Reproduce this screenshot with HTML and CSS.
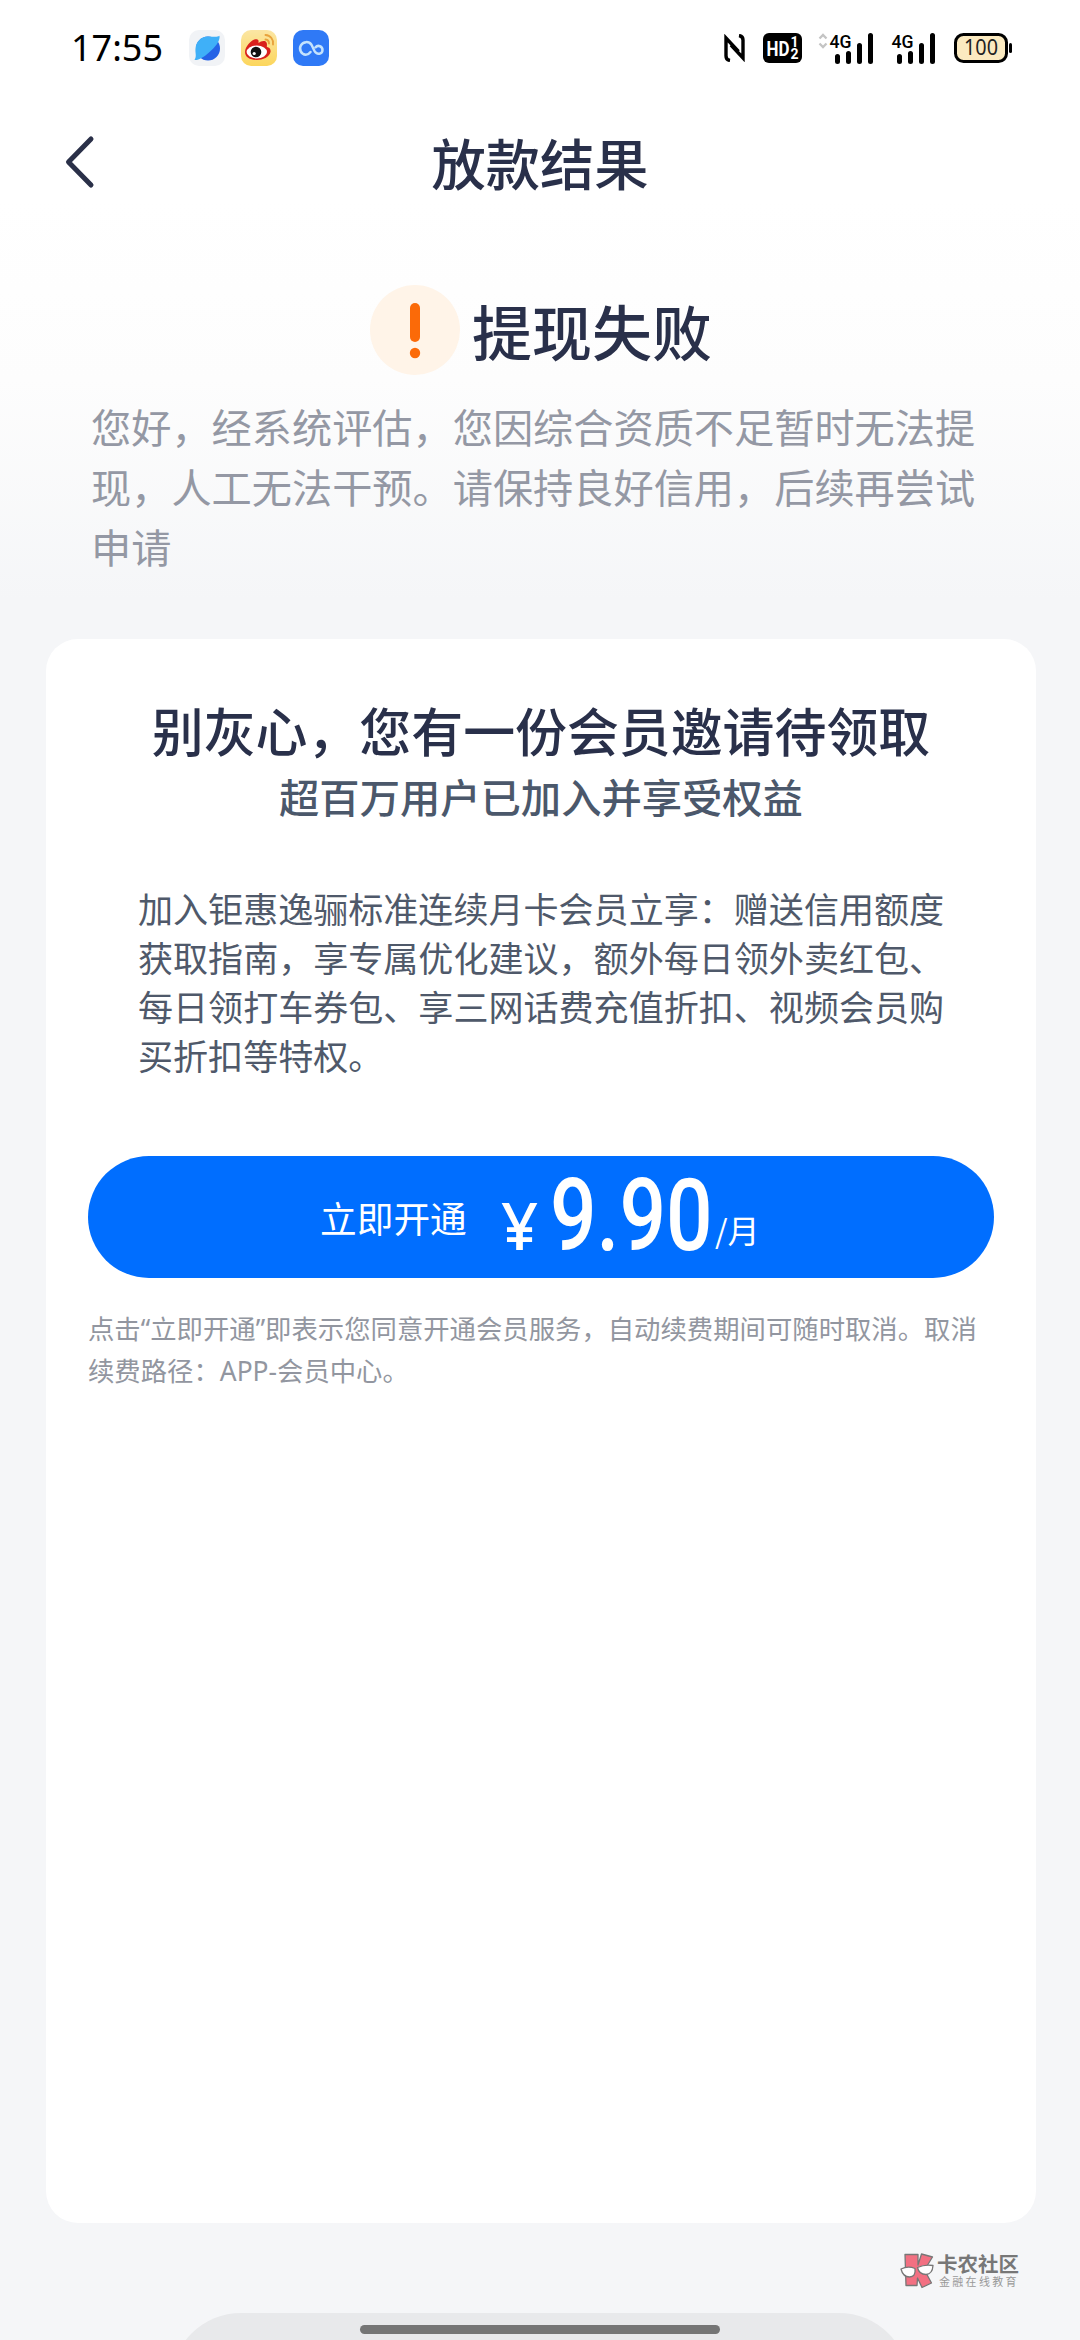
FILE: index.html
```html
<!DOCTYPE html>
<html lang="zh-CN">
<head>
<meta charset="utf-8">
<title>放款结果</title>
<link rel="stylesheet" href="styles.css">
</head>
<body>
<div class="screen">
  <header class="status">
    <span class="clock">17:55</span>
    <div class="apps">
      <svg width="36" height="36" viewBox="0 0 36 36"><rect width="36" height="36" rx="10" fill="#f1f3f6"/><circle cx="19" cy="18.500" r="12" fill="#2563e6"/><path d="M5.500 30C8 26 6 23 6.500 18.500A12.500 12.500 0 0 1 18.500 6.500C23 6 27 8 30.500 5.800C31.500 11 26 17.500 20 22.500C15 27 9.500 30.500 5.500 30Z" fill="#3fb0f8"/></svg>
      <svg width="36" height="36" viewBox="0 0 36 36"><defs><linearGradient id="wb" x1="0" y1="0" x2="0" y2="1"><stop offset="0" stop-color="#fbe6a4"/><stop offset="1" stop-color="#fcd65c"/></linearGradient></defs><rect width="36" height="36" rx="10" fill="url(#wb)"/><path d="M4 22C4 16 12 7.500 16.500 9.500C18 10.200 17.500 12 17.500 13C20 11 24 10 25.500 12.500C26.500 14.500 25.500 16 26 17C28.500 17.500 30 19 29.500 22C28.500 27 22 30 15.500 30C9 30 4 27 4 22Z" fill="#d9201c"/><ellipse cx="15.800" cy="22" rx="10.200" ry="6.500" fill="#fff"/><circle cx="15" cy="22" r="5.300" fill="#111"/><circle cx="13.200" cy="23.500" r="1.600" fill="#fff"/><path d="M24.500 5A8 8 0 0 1 32 14.500M24.500 9.500A4 4 0 0 1 28 13.500" fill="none" stroke="#e8a23c" stroke-width="1.900" stroke-linecap="round"/></svg>
      <svg width="36" height="36" viewBox="0 0 36 36"><rect width="36" height="36" rx="10" fill="#2f79f6"/><path d="M17.500 22C16 24 14.500 24.700 12.800 24.700A6.300 6.300 0 1 1 18.500 14.800L21.500 21C24 25.500 29.500 24 29.500 20A4 4 0 0 0 22.500 17.300" fill="none" stroke="#c3e2fd" stroke-width="2.500" stroke-linecap="round"/></svg>
    </div>
    <div class="indicators">
      <svg width="21" height="28" viewBox="0 0 21 28"><path d="M6 26.500C3 26 2 24.500 2 22V4L14.500 17.500M7 11L19 24V6C19 3.500 18 2 15 1.500" fill="none" stroke="#000" stroke-width="3.400"/></svg>
      <svg class="hd" width="39" height="30" viewBox="0 0 39 30"><rect width="39" height="30" rx="6" fill="#000"/><text x="3.500" y="22.500" class="hd-main" textLength="23" lengthAdjust="spacingAndGlyphs">HD</text><text x="27.500" y="14" class="hd-num">1</text><text x="27.500" y="25.500" class="hd-num">2</text></svg>
      <svg class="sig1" width="56" height="43" viewBox="0 -6 56 43"><path d="M1.500 5.500L5 2L8.500 5.500M1.500 10.500L5 14L8.500 10.500" fill="none" stroke="#c4c4c4" stroke-width="2.300"/><text x="11.500" y="14.500" class="net" textLength="22" lengthAdjust="spacingAndGlyphs">4G</text><path d="M19.500 23.500V28.500M30.500 20.500V28.500M41.500 12.500V28.500M52.500 2.500V28.500" stroke="#000" stroke-width="5" stroke-linecap="round"/></svg>
      <svg class="sig2" width="46" height="43" viewBox="10 -6 46 43"><text x="11.500" y="14.500" class="net" textLength="22" lengthAdjust="spacingAndGlyphs">4G</text><path d="M19.500 23.500V28.500M30.500 20.500V28.500M41.500 12.500V28.500M52.500 2.500V28.500" stroke="#000" stroke-width="5" stroke-linecap="round"/></svg>
      <svg class="batt" width="59" height="30" viewBox="0 0 59 30"><rect x="1.500" y="1.500" width="51" height="27" rx="8" fill="#fbeac0" stroke="#000" stroke-width="3"/><rect x="55" y="10" width="3" height="10" rx="1.500" fill="#000"/><text x="27" y="22.300" class="batt-num" text-anchor="middle" textLength="34" lengthAdjust="spacingAndGlyphs">100</text></svg>
    </div>
  </header>

  <nav class="nav">
    <svg class="back" width="30" height="54" viewBox="0 0 30 54"><path d="M26 4L3.500 27L26 50" fill="none" stroke="#2a3048" stroke-width="5" stroke-linecap="round" stroke-linejoin="round"/></svg>
    <h1 class="nav-title">放款结果</h1>
  </nav>

  <section class="result">
    <div class="result-head">
      <svg width="90" height="90" viewBox="0 0 90 90"><circle cx="45" cy="45" r="45" fill="#fff4e8"/><path d="M45 23V52" stroke="#fb6a08" stroke-width="10" stroke-linecap="round"/><circle cx="45" cy="68" r="5.200" fill="#fb6a08"/></svg>
      <h2 class="result-title">提现失败</h2>
    </div>
    <p class="result-text">您好，经系统评估，您因综合资质不足暂时无法提<br>现，人工无法干预。请保持良好信用，后续再尝试<br>申请</p>
  </section>

  <main class="card">
    <h3 class="card-title">别灰心，您有一份会员邀请待领取</h3>
    <p class="card-sub">超百万用户已加入并享受权益</p>
    <p class="card-text">加入钜惠逸骊标准连续月卡会员立享：赠送信用额度<br>获取指南，享专属优化建议，额外每日领外卖红包、<br>每日领打车券包、享三网话费充值折扣、视频会员购<br>买折扣等特权。</p>
    <button class="buy"><span class="buy-label">立即开通</span><span class="amount"><span class="yen">¥</span><span class="price">9.90</span><span class="unit">/月</span></span></button>
    <p class="note">点击<span class="latin">“</span>立即开通<span class="latin">”</span>即表示您同意开通会员服务，自动续费期间可随时取消。取消<br>续费路径：<span class="latin">APP-</span>会员中心。</p>
  </main>

  <footer class="brand">
    <svg width="34" height="36" viewBox="0 0 34 36"><g stroke="#777" stroke-width="1.300" stroke-linejoin="round"><path d="M5 1.500H18V12L21.500 1L32.500 4L24.500 17L31.500 30L22 34.500L17.500 25L17 32.500H6Z" fill="#f27082"/><path d="M1 16Q8 12.500 15 15.500Q16 24 9.500 24Q3 24 1 16ZM17.500 14.500Q25 11 33 12.500Q32.500 21 26 21.500Q19 21.500 17.500 14.500Z" fill="#fff"/></g></svg>
    <div class="brand-words"><b class="brand-name">卡农社区</b><span class="brand-tag">金融在线教育</span></div>
  </footer>

  <div class="home"><div class="home-bar"></div></div>
</div>
</body>
</html>
```
FILE: styles.css
```css
* { box-sizing: border-box; margin: 0; padding: 0; }
body { font-family: "Noto Sans CJK SC", sans-serif; color: #29304a; }
svg { display: block; flex: none; }
.screen {
  width: 1080px; height: 2340px; overflow: hidden;
  display: flex; flex-direction: column;
  background: linear-gradient(#fff 200px, #fdfdfd 380px, #f5f6f8 600px);
}

.status { height: 96px; padding: 0 67px 0 71px; display: flex; align-items: center; flex: none; }
.clock { width: 118px; font: 36px/96px "Noto Sans", sans-serif; color: #000; }
.apps { display: flex; gap: 16px; }
.indicators { display: flex; align-items: center; margin-left: auto; }
.hd { margin-left: 18px; }
.sig1, .sig2 { margin-left: 16px; }
.batt { margin-left: 18px; }
.hd-main { font: bold 20px Roboto, sans-serif; fill: #fff; }
.hd-num { font: bold 14px Roboto, sans-serif; fill: #fff; }
.net { font: 500 19px Roboto, sans-serif; fill: #000; }
.batt-num { font: 21px "Noto Sans", sans-serif; fill: #222; }

.nav { height: 132px; flex: none; display: grid; grid-template-columns: 95px 1fr 95px; align-items: center; }
.back { justify-self: end; }
.nav-title { text-align: center; font-size: 54.300px; line-height: 80px; font-weight: 500; }

.result { flex: none; height: 411px; padding: 57px 91px 0; }
.result-head { display: flex; justify-content: center; gap: 12px; align-items: center; height: 90px; padding-left: 2px; }
.result-title { font-size: 60px; line-height: 88px; font-weight: 500; }
.result-text { margin-top: 21px; font-size: 40.200px; line-height: 60px; color: #9498a4; white-space: nowrap; }

.card { flex: none; width: 990px; height: 1584px; margin: 0 44px 0 46px; padding: 55px 42px 0; border-radius: 32px; background: #fff; }
.card-title { text-align: center; font-size: 51.900px; line-height: 72px; font-weight: 500; white-space: nowrap; }
.card-sub { text-align: center; font-size: 40.300px; line-height: 60px; font-weight: 500; color: #4b586b; }
.card-text { margin-top: 57px; padding-left: 50px; font-size: 35.050px; line-height: 49px; color: #4f596a; white-space: nowrap; }
.buy { margin-top: 77px; width: 906px; height: 122px; border: 0; border-radius: 61px; background: #006eff; color: #fff; font-family: inherit; display: flex; align-items: center; padding: 0 0 0 232px; }
.buy-label { font-size: 36.700px; line-height: 54px; width: 181px; text-align: left; }
.amount { display: flex; align-items: baseline; padding-bottom: 4px; }
.yen { font: 500 65px/66px "Noto Sans", sans-serif; width: 49px; text-align: left; }
.price { font: 500 100px/115px Roboto, sans-serif; width: 165px; text-align: left; transform: scaleX(.82); transform-origin: 0 50%; }
.unit { font-size: 32px; line-height: 40px; transform: translateY(-7px); }
.note { margin-top: 29px; font-size: 26.370px; line-height: 42px; color: #9296a0; white-space: nowrap; }
.latin { font-family: "Noto Sans", sans-serif; line-height: 1; }

.brand { flex: none; display: flex; gap: 3px; margin: 30px 0 0 900px; height: 60px; }
.brand-words { display: flex; flex-direction: column; color: #777; }
.brand-name { font-size: 20.500px; line-height: 20px; }
.brand-tag { font-size: 11px; letter-spacing: 2.300px; line-height: 16px; padding-left: 2px; color: #999; }

.home { flex: none; width: 738px; height: 160px; margin: 0 auto; padding-top: 12px; border-radius: 70px; background: #e8e9eb; }
.home-bar { width: 360px; height: 9px; margin: 0 auto; border-radius: 5px; background: #757575; }
```
